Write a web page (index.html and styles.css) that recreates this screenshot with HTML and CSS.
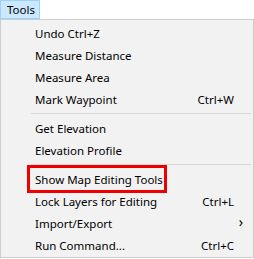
FILE: index.html
```html
<!DOCTYPE html>
<html lang="en">
<head>
    <meta charset="UTF-8">
    <title>Tools menu</title>
    <link rel="stylesheet" href="styles.css">
</head>
<body>
    <div class="menubar">
        <div class="menubar-item active">Tools</div>
    </div>

    <div class="menu">
        <div class="menu-item"><span class="label">Undo Ctrl+Z</span></div>
        <div class="menu-item"><span class="label">Measure Distance</span></div>
        <div class="menu-item"><span class="label">Measure Area</span></div>
        <div class="menu-item"><span class="label">Mark Waypoint</span><span class="shortcut">Ctrl+W</span></div>

        <div class="separator"></div>

        <div class="menu-item"><span class="label">Get Elevation</span></div>
        <div class="menu-item"><span class="label">Elevation Profile</span></div>

        <div class="separator"></div>

        <div class="menu-item marked"><span class="label">Show Map Editing Tools</span></div>
        <div class="menu-item"><span class="label">Lock Layers for Editing</span><span class="shortcut">Ctrl+L</span></div>
        <div class="menu-item"><span class="label">Import/Export</span><span class="submenu">&#x203A;</span></div>
        <div class="menu-item"><span class="label">Run Command...</span><span class="shortcut">Ctrl+C</span></div>
    </div>
</body>
</html>
```

FILE: styles.css
```css
body {
    margin: 0;
    background: white;
    font-family: "Noto Sans", "Open Sans", sans-serif;
    font-size: 11.5px;
    color: #000;
}

.menubar {
    display: flex;
    height: 19px;
}

.menubar-item {
    width: 40px;
    box-sizing: border-box;
    padding-left: 6px;
    line-height: 17px;
    border: 1px solid transparent;
}

.menubar-item.active {
    background: #cce8ff;
    border-color: #99d1ff;
}

.menu {
    width: 254px;
    height: 239px;
    box-sizing: border-box;
    background: #f2f2f2;
    border: 1px solid #cccccc;
    padding: 2px 0 1px 0;
}

.menu-item {
    position: relative;
    display: flex;
    align-items: center;
    height: 22px;
    padding-left: 34px;
    padding-right: 19px;
}

.menu-item .label {
    flex: 1;
    white-space: nowrap;
}

.shortcut {
    white-space: nowrap;
}

.submenu {
    position: absolute;
    right: 10px;
    top: 2px;
    font-size: 14px;
    line-height: 16px;
}

.separator {
    height: 1px;
    margin: 3px 2px 3px 30px;
    background: #d7d7d7;
}

/* red annotation box drawn over the item */
.marked::after {
    content: "";
    position: absolute;
    left: 26px;
    top: -3px;
    width: 134px;
    height: 22px;
    border: 3px solid #ee0000;
}
```
